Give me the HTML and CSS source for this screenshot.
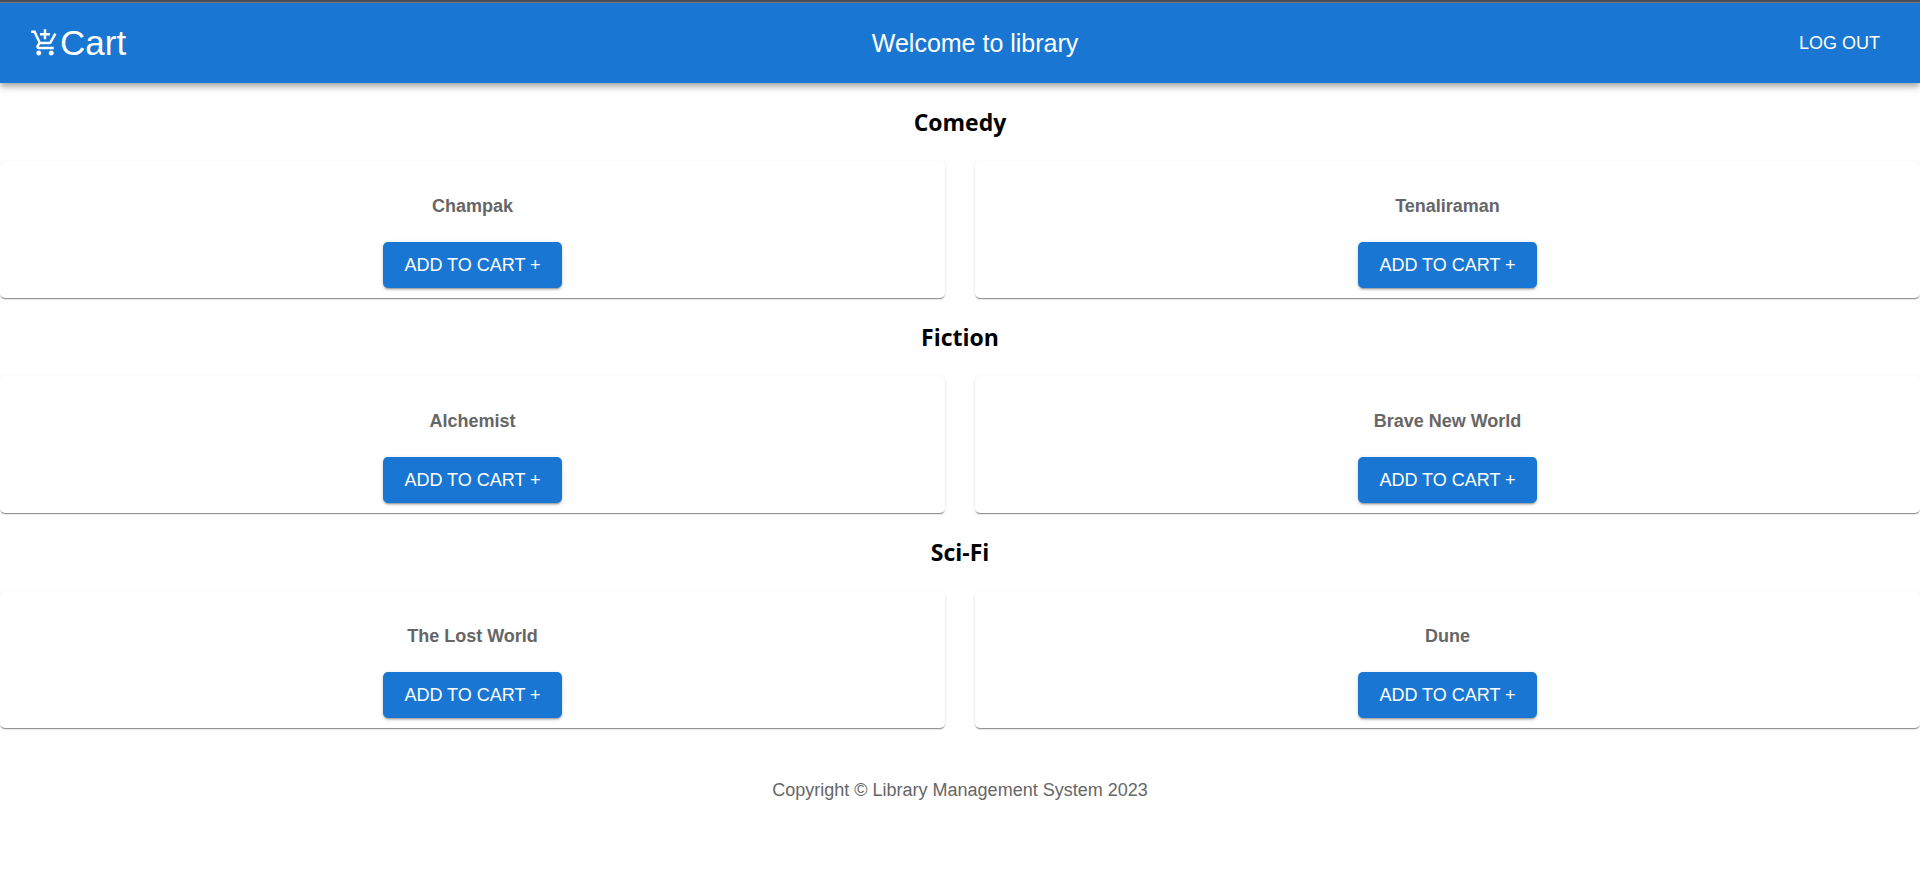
FILE: index.html
```html
<!DOCTYPE html>
<html lang="en">
<head>
  <meta charset="utf-8">
  <title>Library</title>
  <meta name="viewport" content="width=device-width, initial-scale=1">
  <link rel="stylesheet" href="styles.css">
</head>
<body>
  <header class="app-bar">
    <a class="cart-link" href="#cart">
      <svg class="cart-icon" viewBox="0 0 24 24" aria-hidden="true">
        <path fill="currentColor" d="M11 9h2V6h3V4h-3V1h-2v3H8v2h3v3zm-4 9c-1.100 0-1.990.9-1.990 2S5.900 22 7 22s2-.9 2-2-.9-2-2-2zm10 0c-1.100 0-1.990.9-1.990 2s.890 2 1.990 2 2-.9 2-2-.9-2-2-2zm-9.830-3.250.030-.120.900-1.630h7.450c.750 0 1.410-.410 1.750-1.030l3.860-7.010L19.420 4h-.010l-1.100 2-2.760 5H8.530l-.130-.270L6.160 6l-.950-2-.940-2H1v2h2l3.600 7.590-1.350 2.450c-.160.280-.250.610-.250.960 0 1.100.9 2 2 2h12v-2H7.420c-.130 0-.250-.110-.250-.250z"/>
      </svg>
      <span>Cart</span>
    </a>
    <h1 class="app-title">Welcome to library</h1>
    <button class="logout" type="button">LOG OUT</button>
  </header>

  <main>
    <section>
      <h2 class="genre">Comedy</h2>
      <div class="books">
        <article class="book">
          <h3 class="book-title">Champak</h3>
          <button class="add" type="button">ADD TO CART +</button>
        </article>
        <article class="book">
          <h3 class="book-title">Tenaliraman</h3>
          <button class="add" type="button">ADD TO CART +</button>
        </article>
      </div>
    </section>
    <section>
      <h2 class="genre">Fiction</h2>
      <div class="books">
        <article class="book">
          <h3 class="book-title">Alchemist</h3>
          <button class="add" type="button">ADD TO CART +</button>
        </article>
        <article class="book">
          <h3 class="book-title">Brave New World</h3>
          <button class="add" type="button">ADD TO CART +</button>
        </article>
      </div>
    </section>
    <section>
      <h2 class="genre">Sci-Fi</h2>
      <div class="books">
        <article class="book">
          <h3 class="book-title">The Lost World</h3>
          <button class="add" type="button">ADD TO CART +</button>
        </article>
        <article class="book">
          <h3 class="book-title">Dune</h3>
          <button class="add" type="button">ADD TO CART +</button>
        </article>
      </div>
    </section>
  </main>

  <footer class="footer">Copyright © Library Management System 2023</footer>
</body>
</html>
```

FILE: styles.css
```css
* {
  box-sizing: border-box;
}

body {
  margin: 0;
  border-top: 2px solid #494f5a;
  background: #fff;
  font-family: "Liberation Sans", Arial, sans-serif;
  font-size: 18px;
  line-height: 30px;
}

.app-bar {
  display: flex;
  align-items: center;
  min-height: 81px;
  padding: 0 30px;
  border-top: 1px solid #74777c;
  background: #1976d2;
  color: #fff;
  box-shadow: 0 3px 5px -1px rgba(0, 0, 0, 0.2),
    0 5px 6px 0 rgba(0, 0, 0, 0.14),
    0 1px 12px 0 rgba(0, 0, 0, 0.12);
}

.cart-link {
  display: flex;
  align-items: center;
  margin-right: 35px;
  color: inherit;
  font-size: 35px;
  line-height: 44px;
  text-decoration: none;
}

.cart-icon {
  width: 30px;
  height: 30px;
}

.app-title {
  flex: 1;
  margin: 0;
  font-size: 25px;
  font-weight: 400;
  line-height: 40px;
  text-align: center;
}

.logout {
  padding: 8px 10px;
  border: 0;
  background: transparent;
  color: inherit;
  font: inherit;
  cursor: pointer;
}

.genre {
  margin: 0;
  padding: 24px 0;
  font-family: "Segoe UI", "Open Sans", "Noto Sans", sans-serif;
  font-size: 23px;
  font-weight: 700;
  line-height: 30px;
  text-align: center;
}

.books {
  display: grid;
  grid-template-columns: 1fr 1fr;
  gap: 30px;
}

.book {
  display: flex;
  flex-direction: column;
  align-items: center;
  gap: 21px;
  padding: 30px 10px 10px;
  border-radius: 5px;
  background: #fff;
  box-shadow: 0 2px 1px -1px rgba(0, 0, 0, 0.3),
    0 1px 1px 0 rgba(0, 0, 0, 0.14),
    0 1px 3px 0 rgba(0, 0, 0, 0.12);
}

.book-title {
  margin: 0;
  color: #666;
  font-size: 18px;
  font-weight: 700;
  line-height: 30px;
}

.add {
  padding: 8px 21px;
  border: 0;
  border-radius: 5px;
  background: #1976d2;
  color: #fff;
  font: inherit;
  cursor: pointer;
  box-shadow: 0 3px 1px -2px rgba(0, 0, 0, 0.2),
    0 2px 2px 0 rgba(0, 0, 0, 0.14),
    0 1px 5px 0 rgba(0, 0, 0, 0.12);
}

.footer {
  padding: 47px 20px;
  color: #666;
  text-align: center;
}
```
